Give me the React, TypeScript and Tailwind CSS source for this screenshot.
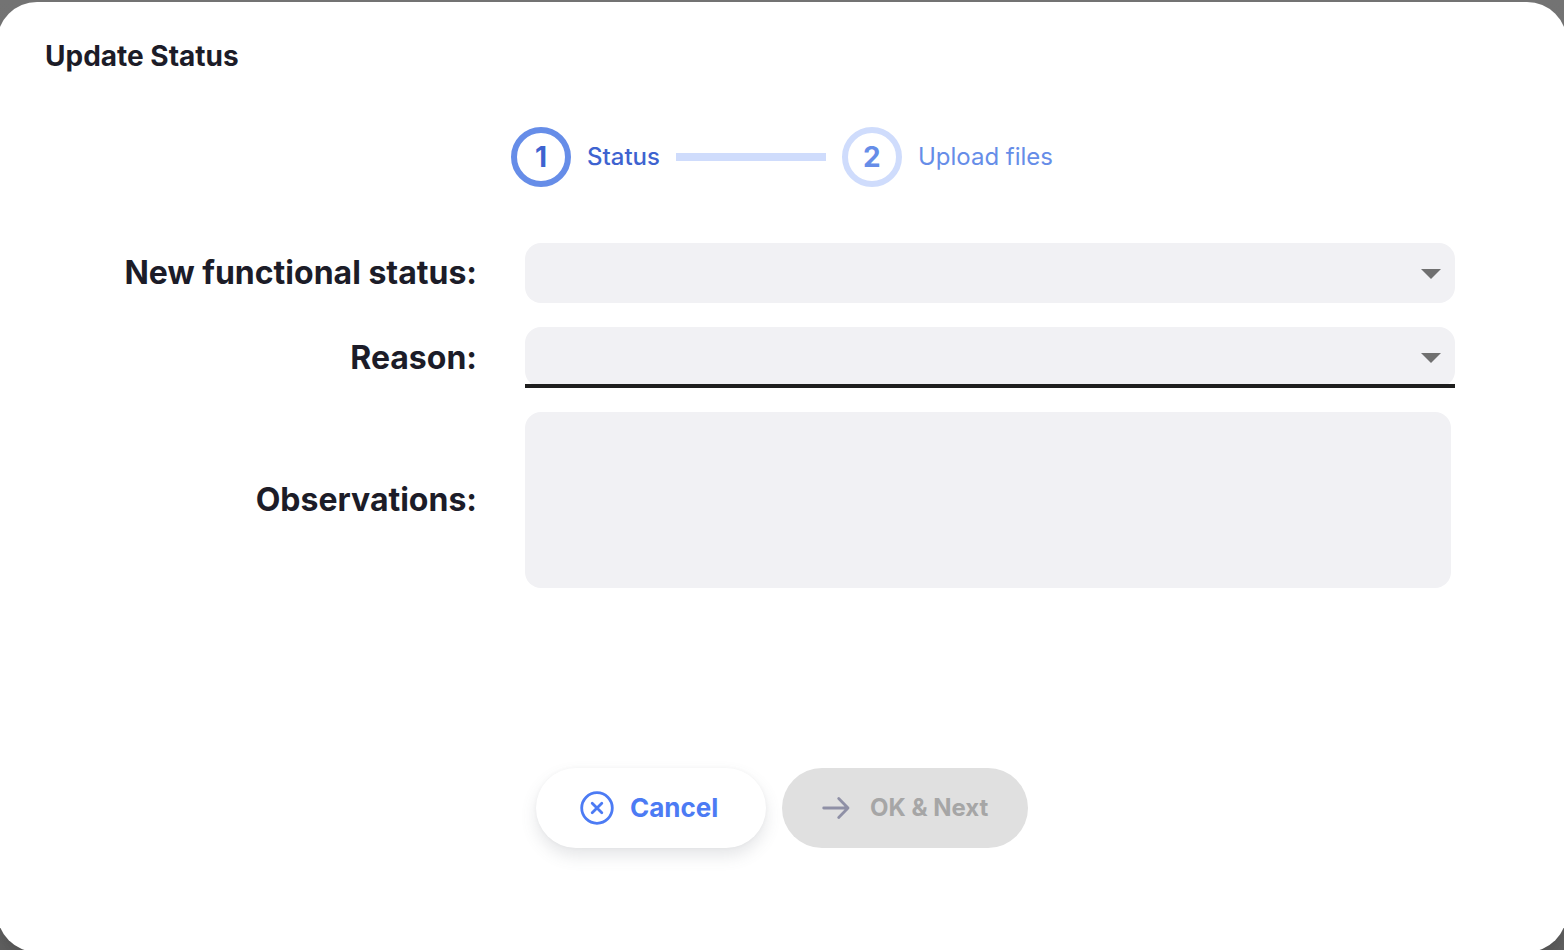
import { useState } from "react";

function Caret() {
  return (
    <svg
      className="pointer-events-none absolute top-[26px] right-[14px] h-[10px] w-[20px] text-[#707070]"
      viewBox="0 0 20 10"
      fill="currentColor"
      aria-hidden="true"
    >
      <path d="M0 0h20L10 10z" />
    </svg>
  );
}

function SelectField({ id, label, options, active = false }: { id: string; label: string; options: string[]; active?: boolean }) {
  return (
    <>
      <label htmlFor={id} className="text-right text-[32px] leading-[40px] font-bold">
        {label}
      </label>
      <div className={active ? "relative pb-px" : "relative"}>
        <select
          id={id}
          defaultValue=""
          className="block h-[60px] w-full appearance-none rounded-2xl bg-[#f1f1f4] px-4 text-2xl outline-none"
        >
          <option value="" />
          {options.map((option) => (
            <option key={option}>{option}</option>
          ))}
        </select>
        <Caret />
        {active && <span className="absolute inset-x-0 bottom-0 h-1 bg-[#1e1e1e]" />}
      </div>
    </>
  );
}

export default function App() {
  const [notes, setNotes] = useState("");

  return (
    <div className="flex min-h-screen flex-col overflow-hidden bg-linear-to-b from-[#737373] to-[#606060] pt-[2px] font-['Inter','Liberation_Sans',sans-serif] text-[#1c1c28]">
      <main
        role="dialog"
        aria-labelledby="dialog-title"
        className="-mx-[3px] -mb-[2px] flex flex-1 flex-col rounded-[40px] bg-white pr-[112px] pl-12 shadow-xl"
      >
        <h1 id="dialog-title" className="pt-9 text-[28px] leading-9 font-bold">
          Update Status
        </h1>

        <ol className="-mr-16 mt-[53px] flex items-center justify-center gap-4">
          <li className="flex items-center gap-4 text-[#3e63d0]" aria-current="step">
            <span className="flex size-[60px] items-center justify-center rounded-full border-6 border-[#668de8] text-[28px] font-bold">
              1
            </span>
            <span className="text-2xl font-medium">Status</span>
          </li>
          <li aria-hidden="true" className="h-2 w-[150px] bg-[#cfdcfc]" />
          <li className="flex items-center gap-4 text-[#668de8]">
            <span className="flex size-[60px] items-center justify-center rounded-full border-6 border-[#cfdcfc] text-[28px] font-bold">
              2
            </span>
            <span className="text-2xl">Upload files</span>
          </li>
        </ol>

        <form className="mt-14 flex flex-col" onSubmit={(event) => event.preventDefault()}>
          <div className="grid grid-cols-[432px_1fr] items-center gap-x-12 gap-y-6">
            <SelectField id="status" label="New functional status:" options={["Functional", "Not functional"]} />
            <SelectField id="reason" label="Reason:" options={["Maintenance", "Other"]} active />
            <label htmlFor="observations" className="text-right text-[32px] leading-[40px] font-bold">
              Observations:
            </label>
            <div className="pr-1">
              <textarea
                id="observations"
                value={notes}
                onChange={(event) => setNotes(event.target.value)}
                className="block h-44 w-full resize-none rounded-2xl bg-[#f1f1f4] p-4 text-2xl outline-none"
              />
            </div>
          </div>

          <div className="-mr-16 mt-[180px] flex justify-center gap-4">
            <button
              type="button"
              className="flex h-20 w-[230px] items-center gap-4 rounded-full bg-white pl-11 text-[26px] leading-8 font-bold text-[#4c7bf4] shadow-[0_8px_16px_rgba(96,97,112,0.16),0_0_4px_rgba(40,41,61,0.04)]"
            >
              <svg className="size-[34px]" viewBox="0 0 34 34" fill="none" stroke="currentColor" strokeWidth="2.8" strokeLinecap="round" aria-hidden="true">
                <circle cx="17" cy="17" r="15.3" />
                <path d="M12.2 12.2l9.6 9.6M21.8 12.2l-9.6 9.6" />
              </svg>
              Cancel
            </button>
            <button
              type="submit"
              disabled
              className="flex h-20 w-[246px] items-center gap-5 rounded-full bg-[#e0e0e0] pl-10 text-2xl font-bold text-[#a6a6a6]"
            >
              <svg className="h-6 w-7" viewBox="0 0 28 24" fill="none" stroke="#8f90a6" strokeWidth="2.8" strokeLinecap="round" strokeLinejoin="round" aria-hidden="true">
                <path d="M1.7 12H26M16.7 2.5L26 12L16.7 21.5" />
              </svg>
              OK &amp; Next
            </button>
          </div>
        </form>
      </main>
    </div>
  );
}
